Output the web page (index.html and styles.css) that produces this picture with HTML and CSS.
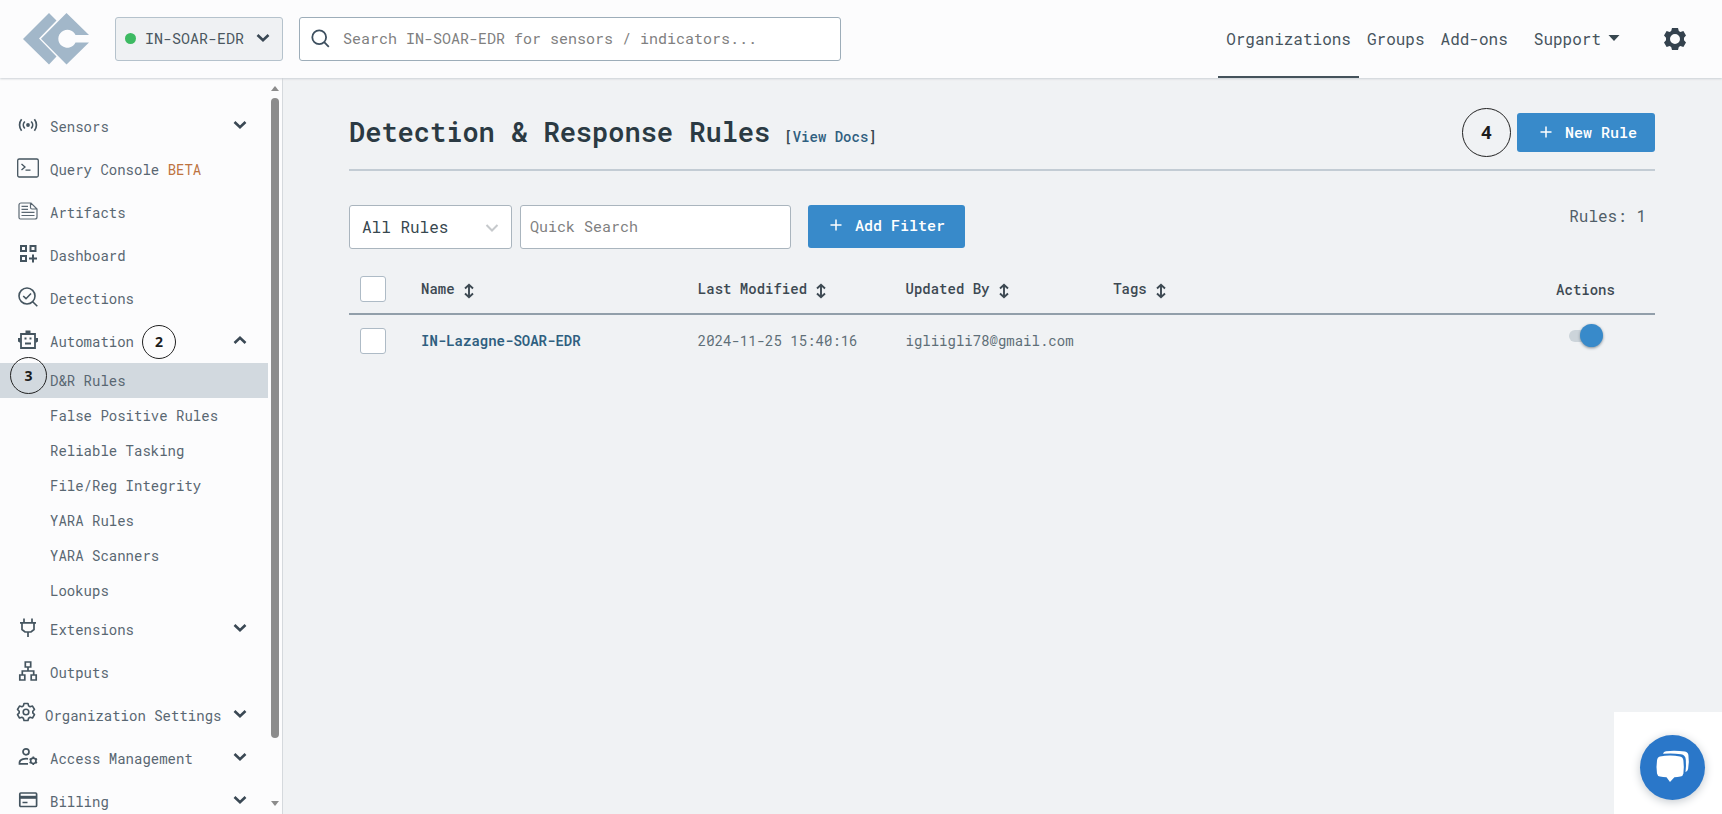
FILE: index.html
```html
<!DOCTYPE html>
<html lang="en">
<head>
<meta charset="utf-8">
<title>Detection &amp; Response Rules</title>
<link rel="stylesheet" href="styles.css">
</head>
<body>
<svg class="defs" width="0" height="0" aria-hidden="true">
  <symbol id="chevron" viewBox="0 0 14 10"><path d="M1.5 2 7 7.3 12.500 2" fill="none" stroke="currentColor" stroke-width="2.6"/></symbol>
  <symbol id="sort" viewBox="0 0 12 16"><path d="M6 2v12M2 5.500 6 1.800l4 3.700M2 10.500l4 3.700 4-3.700" fill="none" stroke="currentColor" stroke-width="1.900"/></symbol>
  <symbol id="plus" viewBox="0 0 12 12"><path d="M6 0.500v11M0.500 6h11" stroke="currentColor" stroke-width="1.500"/></symbol>
</svg>

<header class="topbar">
  <a class="logo" href="#" aria-label="Home">
    <svg width="66" height="52" viewBox="0 0 66 52"><g fill="#a2b7c9"><path d="M0 26 26 0l7.500 7.500L16 25.500 33.500 43.500 26 51.500z"/><path d="M18 25.800 43.500 0 66 22H52.500a9 9 0 1 0 0 7.500H66L43.500 51.500z"/></g></svg>
  </a>
  <button class="org-switch" type="button">
    <span class="status-dot"></span>
    <span>IN-SOAR-EDR</span>
    <svg class="chev" width="14" height="10"><use href="#chevron"/></svg>
  </button>
  <label class="search">
    <svg width="19" height="19" viewBox="0 0 19 19" fill="none" stroke="#3d4f5f" stroke-width="1.800"><circle cx="8.200" cy="8.200" r="6.900"/><path d="m13.200 13.200 4.600 4.600"/></svg>
    <input type="text" aria-label="Search" placeholder="Search IN-SOAR-EDR for sensors / indicators...">
  </label>
  <nav class="topnav" aria-label="Main">
    <a class="active" href="#">Organizations</a>
    <a href="#">Groups</a>
    <a href="#">Add-ons</a>
    <button class="support" type="button">Support
      <svg width="12" height="6" viewBox="0 0 12 6"><path d="M0.500 0h11L6 6z" fill="#37474f"/></svg>
    </button>
    <button class="gear" type="button" aria-label="Settings">
      <svg width="22" height="22" viewBox="0 0 22 22"><path fill="#34424e" fill-rule="evenodd" d="M8 0h6l.8 3 1.600.9 3-.9 2.600 4.600-2 2.200v2.400l2 2.200-2.600 4.600-3-.9-1.600.9L14 22H8l-.8-3-1.600-.9-3 .9L0 14.400l2-2.200V9.800L0 7.600 2.600 3l3 .9 1.600-.9zM11 6a5 5 0 1 0 0 10 5 5 0 0 0 0-10z"/></svg>
    </button>
  </nav>
</header>

<div class="shell">
  <aside class="sidebar">
    <nav class="menu" aria-label="Organization">
      <a class="item" href="#">
        <svg class="icon" viewBox="0 0 22 22" fill="none" stroke="#44545f" stroke-width="1.700"><circle cx="11" cy="11" r="1.900" fill="#44545f" stroke="none"/><path d="M7.800 7.500a5 5 0 0 0 0 7M14.200 7.500a5 5 0 0 1 0 7M4.600 5.300a9 9 0 0 0 0 11.400M17.400 5.300a9 9 0 0 1 0 11.400"/></svg>
        <span>Sensors</span><svg class="chev" width="14" height="10"><use href="#chevron"/></svg>
      </a>
      <a class="item" href="#">
        <svg class="icon" viewBox="0 0 22 22" fill="none" stroke="#44545f" stroke-width="1.300"><rect x=".7" y="2" width="20.600" height="18" rx="1.500"/><path d="m4.500 7 3.500 3-3.500 3M8.500 13.200h5"/></svg>
        <span>Query Console <span class="beta">BETA</span></span>
      </a>
      <a class="item" href="#">
        <svg class="icon" viewBox="0 0 22 22" fill="none" stroke="#5b6873" stroke-width="1.200"><path d="M2 5a2 2 0 0 1 2-2h10l6 6v8a2 2 0 0 1-2 2H3.500A1.500 1.500 0 0 1 2 17.500zM13.500 3v4.500A1.500 1.500 0 0 0 15 9h5M4.500 6.300H11M4.500 9.300H11M4.500 12.300h13M4.500 15.500h13"/></svg>
        <span>Artifacts</span>
      </a>
      <a class="item" href="#">
        <svg class="icon" viewBox="0 0 22 22" fill="none" stroke="#44545f" stroke-width="2"><path d="M4 3h5v5H4zM13.500 3h5v5h-5zM4 13h5v5H4zM16 11.500v8M12 15.500h8"/></svg>
        <span>Dashboard</span>
      </a>
      <a class="item" href="#">
        <svg class="icon" viewBox="0 0 22 22" fill="none" stroke="#44545f" stroke-width="1.600"><circle cx="10" cy="10" r="8"/><path d="m15.700 15.700 4.600 4.600M6.200 10l2.800 2.700 5-5.200"/></svg>
        <span>Detections</span>
      </a>
      <a class="item open" href="#">
        <svg class="icon" viewBox="0 0 22 22" fill="none" stroke="#44545f" stroke-width="1.800"><path d="M4 5h14v14H4z"/><path d="M8 14.500h6M11 5V2"/><path fill="#44545f" stroke="none" d="M8.500 1.500h5V4h-5zM1 9h2.500v5L1 12.500zM21 9h-2.500v5l2.500-1.500zM7.500 8.500h2v2h-2zM12.500 8.500h2v2h-2z"/></svg>
        <span>Automation</span><span class="step step-2">2</span><svg class="chev" width="14" height="10"><use href="#chevron"/></svg>
      </a>
      <div class="submenu">
        <a class="selected" href="#"><span class="step step-3">3</span>D&amp;R Rules</a>
        <a href="#">False Positive Rules</a>
        <a href="#">Reliable Tasking</a>
        <a href="#">File/Reg Integrity</a>
        <a href="#">YARA Rules</a>
        <a href="#">YARA Scanners</a>
        <a href="#">Lookups</a>
      </div>
      <a class="item" href="#">
        <svg class="icon" viewBox="0 0 22 22" fill="none" stroke="#44545f" stroke-width="1.700"><path d="M7 1.500V5M15 1.500V5M3 5.800h16M5 6v6.500L8 15h6l3-2.500V6M11 15v5"/></svg>
        <span>Extensions</span><svg class="chev" width="14" height="10"><use href="#chevron"/></svg>
      </a>
      <a class="item" href="#">
        <svg class="icon" viewBox="0 0 22 22" fill="none" stroke="#44545f" stroke-width="1.700"><path d="M8.300 2h5.400v5H8.300zM2.800 15h5v5h-5zM14.200 15h5v5h-5zM11 7v4M5.300 15v-4h11.400v4"/></svg>
        <span>Outputs</span>
      </a>
      <a class="item tight" href="#">
        <svg class="icon" viewBox="0 0 22 22" fill="none" stroke="#44545f" stroke-width="1.600" stroke-linejoin="round"><path d="M9 2.500h4l.6 2.400 1.500.9 2.400-.7 2 3.400-1.700 1.700v1.700l1.700 1.700-2 3.400-2.400-.7-1.500.9-.6 2.300H9l-.6-2.300-1.500-.9-2.400.7-2-3.400 1.700-1.700v-1.700L2.500 8.500l2-3.400 2.400.7 1.500-.9z"/><circle cx="11" cy="11" r="2.800"/></svg>
        <span>Organization Settings</span><svg class="chev" width="14" height="10"><use href="#chevron"/></svg>
      </a>
      <a class="item" href="#">
        <svg class="icon" viewBox="0 0 22 22" fill="none" stroke="#44545f" stroke-width="1.700"><circle cx="9" cy="5.800" r="3"/><path d="M11 17.800H2.500v-1.500C3 13 8 12.300 11 12.800"/><circle cx="16.300" cy="14.800" r="2.700"/><path d="M16.300 10.500v1.700M16.300 17.400v1.700M12.600 12.700l1.400.8M18.600 16.100l1.400.8M12.600 16.900l1.400-.8M18.600 13.500l1.400-.8"/></svg>
        <span>Access Management</span><svg class="chev" width="14" height="10"><use href="#chevron"/></svg>
      </a>
      <a class="item" href="#">
        <svg class="icon" viewBox="0 0 22 22" fill="none" stroke="#44545f" stroke-width="1.700"><rect x="2.800" y="4" width="16.800" height="13.500" rx="1"/><path d="M2.800 8.300h16.800" stroke-width="3"/><path d="M5.500 13.500h5" stroke-width="1.500"/></svg>
        <span>Billing</span><svg class="chev" width="14" height="10"><use href="#chevron"/></svg>
      </a>
    </nav>
    <div class="scrollbar" aria-hidden="true">
      <svg width="8" height="5" viewBox="0 0 8 5"><path d="M4 0l4 5H0z" fill="#8c8c8c"/></svg>
      <div class="track"><div class="thumb"></div></div>
      <svg width="8" height="5" viewBox="0 0 8 5"><path d="M0 0h8L4 5z" fill="#8c8c8c"/></svg>
    </div>
  </aside>

  <main class="content">
    <div class="page-head">
      <h1>Detection &amp; Response Rules</h1>
      <span class="docs">[<a href="#">View Docs</a>]</span>
      <span class="step step-4">4</span>
      <button class="primary new-rule" type="button"><svg width="12" height="12"><use href="#plus"/></svg>New Rule</button>
    </div>

    <div class="filters">
      <div class="select">
        <select aria-label="Rule type"><option>All Rules</option></select>
        <svg width="14" height="10" viewBox="0 0 14 10"><path d="m1.500 2 5.500 5.500L12.500 2" fill="none" stroke="#c6c9cc" stroke-width="2"/></svg>
      </div>
      <input class="quick" type="text" aria-label="Quick Search" placeholder="Quick Search">
      <button class="primary add-filter" type="button"><svg width="12" height="12"><use href="#plus"/></svg>Add Filter</button>
      <span class="count">Rules: 1</span>
    </div>

    <table class="rules">
      <thead>
        <tr>
          <th class="c-check"><input class="check" type="checkbox" aria-label="Select all rules"></th>
          <th class="c-name">Name <svg class="sort" width="12" height="16"><use href="#sort"/></svg></th>
          <th class="c-mod">Last Modified <svg class="sort" width="12" height="16"><use href="#sort"/></svg></th>
          <th class="c-by">Updated By <svg class="sort" width="12" height="16"><use href="#sort"/></svg></th>
          <th>Tags <svg class="sort" width="12" height="16"><use href="#sort"/></svg></th>
          <th class="c-act">Actions</th>
        </tr>
      </thead>
      <tbody>
        <tr>
          <td class="c-check"><input class="check" type="checkbox" aria-label="Select IN-Lazagne-SOAR-EDR"></td>
          <td><a href="#">IN-Lazagne-SOAR-EDR</a></td>
          <td>2024-11-25 15:40:16</td>
          <td>igliigli78@gmail.com</td>
          <td></td>
          <td class="c-act"><input class="toggle" type="checkbox" aria-label="Rule enabled" checked></td>
        </tr>
      </tbody>
    </table>
  </main>
</div>

<div class="chat">
  <button type="button" aria-label="Open chat">
    <svg width="35" height="34" viewBox="0 0 35 34" fill="#fff"><path d="M5 6.500Q15 4.300 25 6.500q3 .6 3.400 4 .9 7 0 13-.4 2.700-3 3-3 .5-6 .7L15 32l-3.500-4.800q-3.500-.2-6.500-.7-2.600-.4-3-3-1-6.500 0-13 .4-3.400 3-4z"/><path d="M8 3.800Q8.500 1.500 11 1.200q9-1 19 .3 3 .5 3.400 3.500 1 7-.3 14-.3 2-2.600 3.200.8-6.200.3-12.500-.3-4.800-4.800-5.500Q17 2.900 8 3.800z"/></svg>
  </button>
</div>
</body>
</html>
```
FILE: styles.css
```css
* { box-sizing: border-box; }

body {
  margin: 0;
  height: 100vh;
  display: flex;
  flex-direction: column;
  overflow: hidden;
  background: #f0f2f4;
  color: #37474f;
  font-family: "Roboto Mono", "DejaVu Sans Mono", monospace;
  font-size: 14px;
}

a { color: inherit; text-decoration: none; }
button, input, select { font: inherit; color: inherit; margin: 0; }
button { cursor: pointer; }
svg { flex: none; }
.defs { position: absolute; }

/* Top bar */
.topbar {
  flex: none;
  display: flex;
  align-items: center;
  height: 78px;
  padding: 0 36px 0 23px;
  background: #fcfcfd;
  box-shadow: 0 1px 2px #ccd1d5;
  z-index: 1;
}
.logo { display: flex; margin-right: 26px; }

.org-switch {
  display: flex;
  align-items: center;
  width: 168px;
  height: 44px;
  padding: 0 12px 2px 9px;
  border: 1px solid #b5c2cc;
  border-radius: 3px;
  background: #eff1f3;
  font-size: 15px;
  color: #4b5760;
}
.status-dot { width: 11px; height: 11px; margin-right: 9px; border-radius: 50%; background: #3dba62; }
.org-switch .chev { margin-left: auto; }
.chev { color: #3a4854; }

.search {
  display: flex;
  align-items: center;
  gap: 13px;
  width: 542px;
  height: 44px;
  margin-left: 16px;
  padding: 0 12px 2px 11px;
  border: 1px solid #9dadb9;
  border-radius: 3px;
  background: #fff;
}
.search input { flex: 1; min-width: 0; padding: 0; border: 0; outline: 0; background: none; font-size: 15px; }
::placeholder { color: #808080; opacity: 1; }

.topnav { display: flex; align-items: center; align-self: stretch; margin-left: auto; font-size: 16px; color: #47545d; }
.topnav a { display: flex; align-items: center; height: 100%; padding: 0 8px; border-bottom: 2px solid transparent; }
.topnav .active { border-color: #44525b; }
.topnav button { padding: 0; border: 0; background: none; }
.topnav .support { display: flex; align-items: center; gap: 7px; margin-left: 18px; padding-bottom: 2px; }
.gear { display: flex; margin-left: 44px; }

/* Sidebar */
.shell { flex: 1; display: flex; min-height: 0; }
.sidebar {
  flex: none;
  display: flex;
  width: 283px;
  border-right: 1px solid #d5d9dd;
  background: #fcfcfd;
  color: #596772;
}
.menu { flex: 1; padding-top: 27px; overflow: hidden; }
.item { display: flex; align-items: center; height: 43px; padding: 0 21px 0 17px; white-space: nowrap; }
.icon { width: 22px; height: 22px; margin: 0 11px 4px 0; }
.item .chev { margin: 0 0 4px auto; }
.open .chev { transform: rotate(180deg); }
.tight { padding-left: 15px; }
.tight .icon { margin-right: 8px; margin-bottom: 8px; }
.beta { color: #bd7340; }
.submenu a { position: relative; display: flex; align-items: center; height: 35px; padding: 0 0 1px 50px; }
.submenu .selected { background: #d2d9df; }

.scrollbar { display: flex; flex-direction: column; align-items: center; gap: 7px; width: 14px; padding: 8px 1px 8px 0; }
.track { flex: 1; width: 8px; }
.thumb { height: 92%; border-radius: 4px; background: #8c8c8c; }

/* Numbered markers */
.step {
  display: flex;
  align-items: center;
  justify-content: center;
  flex: none;
  border: 1px solid #222;
  border-radius: 50%;
  color: #1c1c1c;
  font-family: "Open Sans", "Noto Sans", sans-serif;
  font-weight: 700;
}
.step-2 { width: 34px; height: 34px; margin-left: 8px; }
.step-3 { position: absolute; left: 10px; top: -6px; width: 37px; height: 37px; }
.step-4 { width: 49px; height: 49px; margin-left: auto; font-size: 18px; }

/* Content */
.content { flex: 1; min-width: 0; padding: 28px 67px 0 66px; }
.page-head {
  display: flex;
  align-items: center;
  height: 65px;
  padding-bottom: 11px;
  border-bottom: 2px solid #c3ccd4;
}
h1 { margin: 0; font-size: 27px; font-weight: 600; line-height: 32px; color: #2b3a43; }
.docs { margin: 8px 0 0 14px; font-size: 14px; font-weight: 500; color: #37474f; }
.docs a { color: #2f5f80; }

.primary {
  display: flex;
  align-items: center;
  border: 0;
  border-radius: 3px;
  background: #388aca;
  color: #fff;
  font-size: 15px;
  font-weight: 500;
}
.new-rule { height: 39px; margin-left: 6px; padding: 0 18px 0 23px; gap: 13px; }
.add-filter { height: 43px; margin-left: 17px; padding: 0 20px 4px 22px; gap: 13px; }

.filters { display: flex; align-items: flex-start; padding-top: 34px; }
.select { position: relative; width: 163px; margin-right: 8px; }
.select select {
  width: 100%;
  height: 44px;
  padding: 0 12px 2px;
  appearance: none;
  border: 1px solid #aab5be;
  border-radius: 3px;
  background: #fff;
  font-size: 16px;
}
.select svg { position: absolute; right: 13px; top: 18px; pointer-events: none; }
.quick { width: 271px; height: 44px; padding: 0 9px 2px; border: 1px solid #aab5be; border-radius: 3px; background: #fff; font-size: 15px; }
.count { margin-left: auto; padding-right: 9px; font-size: 16px; line-height: 22px; color: #505e68; }

/* Rules table */
.rules { width: 100%; margin-top: 16px; border-collapse: collapse; table-layout: fixed; text-align: left; }
.rules th, .rules td { padding: 0; white-space: nowrap; }
.rules th { height: 49px; border-bottom: 2px solid #929faa; font-weight: 500; color: #3d4952; }
.rules td { height: 52px; color: #5f6f78; }
.rules td a { font-weight: 600; color: #2f5f80; }
.rules .c-check { width: 72px; padding-left: 11px; }
.c-name { width: 21.2%; }
.c-mod, .c-by { width: 15.9%; }
.rules .c-act { width: 139px; text-align: center; }
.sort { vertical-align: middle; }

.check {
  display: block;
  appearance: none;
  width: 26px;
  height: 26px;
  border: 1px solid #aebbc6;
  border-radius: 3px;
  background: #fff;
}
.toggle {
  display: inline-flex;
  align-items: center;
  justify-content: flex-end;
  appearance: none;
  width: 34px;
  height: 12px;
  margin-bottom: 6px;
  border-radius: 6px;
  background: #ccd4da;
}
.toggle::before {
  content: "";
  flex: none;
  width: 23px;
  height: 23px;
  border-radius: 50%;
  background: #388aca;
  box-shadow: 0 1px 3px #7d8b96;
}

/* Chat launcher */
.chat {
  position: fixed;
  right: 0;
  bottom: 0;
  padding: 23px 17px 14px 26px;
  background: #fff;
}
.chat button {
  display: flex;
  align-items: center;
  justify-content: center;
  width: 65px;
  height: 65px;
  padding: 0 0 2px;
  border: 0;
  border-radius: 50%;
  background: #2a77c9;
  box-shadow: 0 2px 10px #c4c9ce;
}
```
